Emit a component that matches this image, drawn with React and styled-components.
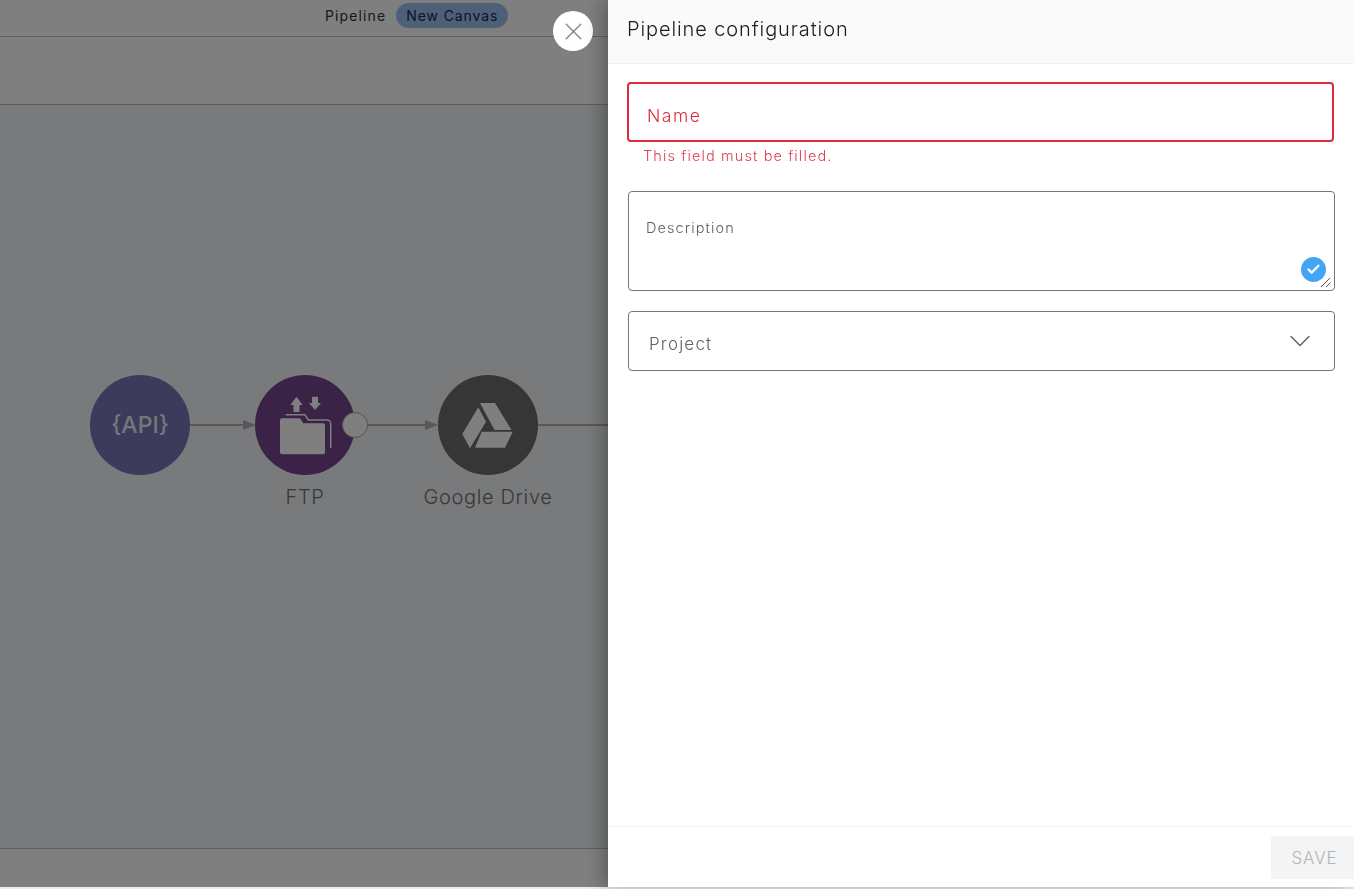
import styled, { createGlobalStyle } from "styled-components";
import { X, ChevronDown, Check } from "lucide-react";

const font = `Inter, "Open Sans", "Liberation Sans", sans-serif`;

const nodes = [
    { id: "api", x: 140, color: "#7a76b6" },
    { id: "ftp", x: 305, color: "#74478c", label: "FTP" },
    { id: "drive", x: 488, color: "#6c6c6c", label: "Google Drive" },
];

function FolderIcon() {
    return (
        <svg width="100" height="100" viewBox="0 0 100 100">
            <path d="M38.500 37v-7h-3.200l6.200-8.300 6.200 8.300h-3.200v7z" fill="#fff" />
            <path d="M57 21.700h6V28h3l-6 7-6-7h3z" fill="#fff" />
            <path d="M27 43.300h18l3.300 5H68a2 2 0 0 1 2 2v27a2 2 0 0 1-2 2H27a2 2 0 0 1-2-2v-32a2 2 0 0 1 2-2z" fill="#fff" />
            <path d="M30.700 39.800H50l3.300 5.200H72a3.700 3.700 0 0 1 3.700 3.700V73" fill="none" stroke="#fff" strokeWidth="1.500" />
        </svg>
    );
}

function DriveIcon() {
    return (
        <svg width="100" height="100" viewBox="0 0 100 100">
            <path d="M42 28h15l16.500 27H56.500z" fill="#fff" />
            <path d="M40.300 32.300 48 46.700 32 73.300 24.300 59z" fill="#fff" />
            <path d="M43.700 56.700h31L67 72.700H37z" fill="#fff" />
        </svg>
    );
}

export default function App() {
    return (
        <>
            <GlobalStyle />
            <Page>
                <TopBar>
                    <Crumb>Pipeline</Crumb>
                    <Pill>New Canvas</Pill>
                </TopBar>
                <Toolbar />
                <Canvas>
                    <Edges width="700" height="743">
                        <line x1="190" y1="320" x2="245" y2="320" />
                        <path d="M243 315l13 5-13 5z" />
                        <line x1="368" y1="320" x2="427" y2="320" />
                        <path d="M425 315l13 5-13 5z" />
                        <line x1="538" y1="320" x2="700" y2="320" />
                    </Edges>
                    {nodes.map(n => (
                        <Node key={n.id} $x={n.x}>
                            <Circle $color={n.color}>
                                {n.id === "api" && <ApiText>{"{API}"}</ApiText>}
                                {n.id === "ftp" && <FolderIcon />}
                                {n.id === "drive" && <DriveIcon />}
                            </Circle>
                            {n.label && <NodeLabel>{n.label}</NodeLabel>}
                        </Node>
                    ))}
                    <Port />
                </Canvas>
                <BottomBar />
            </Page>
            <Backdrop />
            <CloseButton>
                <X size={29} strokeWidth={1.1} />
            </CloseButton>
            <Drawer>
                <DrawerHeader>Pipeline configuration</DrawerHeader>
                <DrawerBody>
                    <NameField>
                        <NameLabel>Name</NameLabel>
                    </NameField>
                    <ErrorText>This field must be filled.</ErrorText>
                    <AreaWrap>
                        <AreaLabel htmlFor="description">Description</AreaLabel>
                        <Area id="description" />
                        <CheckBadge>
                            <Check size={15} strokeWidth={3.6} color="#fff" />
                        </CheckBadge>
                        <Grip width="12" height="12" viewBox="0 0 12 12">
                            <path d="M1 11 10 2M6 11l4.500-4.500" />
                        </Grip>
                    </AreaWrap>
                    <SelectField>
                        <SelectText>Project</SelectText>
                        <ChevronDown size={36} strokeWidth={0.8} color="#555" />
                    </SelectField>
                </DrawerBody>
                <DrawerFooter>
                    <SaveButton disabled>SAVE</SaveButton>
                </DrawerFooter>
            </Drawer>
        </>
    );
}

const GlobalStyle = createGlobalStyle`
    html, body {
        margin: 0;
        height: 889px;
        overflow: hidden;
        background: #e9eef0;
        font-family: ${font};
    }
    * {
        box-sizing: border-box;
    }
`;

const Page = styled.div`
    height: 887px;
    display: flex;
    flex-direction: column;
    background: #fff;
`;

const TopBar = styled.div`
    height: 37px;
    border-bottom: 1px solid #c4c4c4;
    display: flex;
    align-items: flex-start;
    padding: 3px 0 0 325px;
    gap: 10px;
`;

const Crumb = styled.span`
    font-size: 14px;
    line-height: 25px;
    letter-spacing: 1.12px;
    color: #3a2a3a;
`;

const Pill = styled.span`
    width: 112px;
    height: 25px;
    border-radius: 13px;
    background: #9dc0f0;
    color: #14284a;
    font-size: 14px;
    line-height: 25px;
    letter-spacing: 0.9px;
    text-align: center;
`;

const Toolbar = styled.div`
    height: 68px;
    border-bottom: 1px solid #bbb;
    background: #fff;
`;

const Canvas = styled.div`
    position: relative;
    flex: 1;
    background: #f3f5f7;
    border-bottom: 1px solid #c0c0c0;
`;

const Edges = styled.svg`
    position: absolute;
    left: 0;
    top: 0;
    line {
        stroke: #b0b0b0;
        stroke-width: 2;
    }
    path {
        fill: #b0b0b0;
    }
`;

const Node = styled.div`
    position: absolute;
    left: ${p => p.$x - 100}px;
    top: 270px;
    width: 200px;
    display: flex;
    flex-direction: column;
    align-items: center;
`;

const Circle = styled.div`
    width: 100px;
    height: 100px;
    border-radius: 50%;
    background: ${p => p.$color};
    display: flex;
    align-items: center;
    justify-content: center;
`;

const ApiText = styled.span`
    color: #fff;
    font-size: 23px;
    font-weight: 500;
    opacity: 0.85;
`;

const NodeLabel = styled.span`
    margin-top: 10px;
    font-size: 20px;
    font-weight: 300;
    line-height: 24px;
    letter-spacing: 0.65px;
    color: #707070;
`;

const Port = styled.div`
    position: absolute;
    left: 342px;
    top: 307px;
    width: 26px;
    height: 26px;
    border-radius: 50%;
    background: #fff;
    border: 1px solid #aaa;
`;

const BottomBar = styled.div`
    height: 38px;
    background: #fff;
`;

const Backdrop = styled.div`
    position: fixed;
    left: 0;
    top: 0;
    width: 100%;
    height: 887px;
    background: rgba(0, 0, 0, 0.5);
`;

const CloseButton = styled.button`
    position: fixed;
    left: 553px;
    top: 11px;
    width: 40px;
    height: 40px;
    border-radius: 50%;
    border: none;
    padding: 0;
    background: #fff;
    color: #808080;
    display: flex;
    align-items: center;
    justify-content: center;
`;

const Drawer = styled.aside`
    position: fixed;
    left: 608px;
    right: 0;
    top: 0;
    height: 887px;
    background: #fff;
    box-shadow: -5px 0 18px rgba(0, 0, 0, 0.3);
    display: flex;
    flex-direction: column;
`;

const DrawerHeader = styled.header`
    height: 64px;
    padding: 0 19px 5px;
    background: #fafafa;
    border-bottom: 1px solid #f0f0f0;
    display: flex;
    align-items: center;
    font-size: 20px;
    font-weight: 300;
    letter-spacing: 0.9px;
    color: #1c1c1c;
`;

const DrawerBody = styled.div`
    flex: 1;
    padding: 18px 19px 0 20px;
    display: flex;
    flex-direction: column;
`;

const NameField = styled.div`
    margin-left: -1px;
    margin-right: 1px;
    height: 60px;
    border: 2px solid #dc2a3a;
    border-radius: 4px;
    padding: 7px 18px 0;
    display: flex;
    align-items: center;
`;

const NameLabel = styled.span`
    font-size: 17.500px;
    font-weight: 300;
    letter-spacing: 1.500px;
    color: #dc2a3a;
`;

const ErrorText = styled.div`
    margin: 5px 0 0 15px;
    height: 44px;
    font-size: 14.500px;
    font-weight: 300;
    line-height: 18px;
    letter-spacing: 1.12px;
    color: #e0404f;
`;

const AreaWrap = styled.div`
    position: relative;
    height: 100px;
    margin-bottom: 20px;
`;

const AreaLabel = styled.label`
    position: absolute;
    left: 18px;
    top: 28px;
    font-size: 14.500px;
    font-weight: 300;
    line-height: 18px;
    letter-spacing: 1.1px;
    color: #606060;
`;

const Area = styled.textarea`
    display: block;
    width: 100%;
    height: 100px;
    border: 1px solid #757575;
    border-radius: 4px;
    background: transparent;
    outline: none;
    resize: none;
`;

const CheckBadge = styled.span`
    position: absolute;
    right: 9px;
    top: 66px;
    width: 25px;
    height: 25px;
    border-radius: 50%;
    background: #42a5f5;
    display: flex;
    align-items: center;
    justify-content: center;
`;

const Grip = styled.svg`
    position: absolute;
    right: 3px;
    bottom: 3px;
    path {
        fill: none;
        stroke: #555;
        stroke-width: 1;
    }
`;

const SelectField = styled.div`
    height: 60px;
    border: 1px solid #757575;
    border-radius: 4px;
    padding: 0 16px 0 20px;
    display: flex;
    align-items: center;
    justify-content: space-between;
`;

const SelectText = styled.span`
    margin-top: 5px;
    font-size: 17px;
    font-weight: 300;
    letter-spacing: 1.2px;
    color: #606060;
`;

const DrawerFooter = styled.footer`
    height: 61px;
    border-top: 1px solid #f2f2f2;
    display: flex;
    justify-content: flex-end;
    padding-top: 9px;
`;

const SaveButton = styled.button`
    width: 83px;
    height: 43px;
    border: none;
    border-radius: 3px 0 0 3px;
    background: #f3f4f6;
    color: #b5b5b5;
    font-family: ${font};
    font-size: 17px;
    font-weight: 300;
    letter-spacing: 0.9px;
    padding: 0 0 0 4px;
`;
